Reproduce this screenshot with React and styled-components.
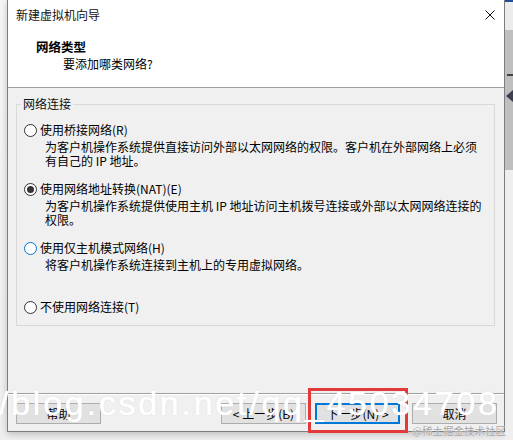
import React from 'react';
import styled, { createGlobalStyle } from 'styled-components';

const GlobalStyle = createGlobalStyle`
  html, body {
    margin: 0;
    padding: 0;
    background: #f4f4f4;
  }
  body {
    font-family: "Noto Sans CJK SC", "Noto Sans", sans-serif;
    font-size: 12px;
    color: #000;
  }
`;

const options = [
  {
    label: '使用桥接网络(R)',
    desc: ['为客户机操作系统提供直接访问外部以太网网络的权限。客户机在外部网络上必须', '有自己的 IP 地址。'],
  },
  {
    label: '使用网络地址转换(NAT)(E)',
    desc: ['为客户机操作系统提供使用主机 IP 地址访问主机拨号连接或外部以太网网络连接的', '权限。'],
    checked: true,
  },
  {
    label: '使用仅主机模式网络(H)',
    desc: ['将客户机操作系统连接到主机上的专用虚拟网络。'],
    focus: true,
  },
  {
    label: '不使用网络连接(T)',
  },
];

function App() {
  return (
    <Page>
      <GlobalStyle />
      <Dialog>
        <TitleBar>
          <Title>新建虚拟机向导</Title>
          <svg width='10' height='10' viewBox='0 0 10 10'>
            <path d='M0.5 0.5 L9.5 9.5 M9.5 0.5 L0.5 9.5' stroke='#111' strokeWidth='1' />
          </svg>
        </TitleBar>
        <Header>
          <Heading>网络类型</Heading>
          <SubHeading>要添加哪类网络?</SubHeading>
        </Header>
        <Body>
          <Group>
            <Legend>网络连接</Legend>
            {options.map((opt) => (
              <Option key={opt.label}>
                <RadioRow>
                  <Radio $checked={opt.checked} $focus={opt.focus} />
                  <span>{opt.label}</span>
                </RadioRow>
                {opt.desc && (
                  <Desc>
                    {opt.desc.map((line) => (
                      <DescLine key={line}>{line}</DescLine>
                    ))}
                  </Desc>
                )}
              </Option>
            ))}
          </Group>
        </Body>
        <Footer>
          <Button>帮助</Button>
          <Spacer />
          <Button>&lt; 上一步(B)</Button>
          <Button $primary $gap={9}>下一步(N) &gt;</Button>
          <Button $gap={12}>取消</Button>
        </Footer>
      </Dialog>
      <BackStrip>
        <StripTop />
        <StripMid>
          <Dash />
          <Arrow />
        </StripMid>
        <StripBottom />
      </BackStrip>

      <Highlight />
      <Watermark>/blog.csdn.net/qq_45034708</Watermark>
      <Credit>@稀土掘金技术社区</Credit>
    </Page>
  );
}

const Page = styled.div`
  position: relative;
  width: 513px;
  height: 440px;
  overflow: hidden;
  display: flex;
  align-items: flex-start;
  background: linear-gradient(#f6f6f6, #efefef);
`;

const Dialog = styled.div`
  box-sizing: border-box;
  width: 498px;
  height: 432px;
  margin-left: 7px;
  border: 1px solid #7d7d7d;
  border-top: none;
  background: #f0f0f0;
  display: flex;
  flex-direction: column;
  box-shadow: 0 2px 7px rgba(0, 0, 0, 0.22);
`;

const TitleBar = styled.div`
  height: 30px;
  background: #fff;
  display: flex;
  align-items: center;
  justify-content: space-between;
  padding: 0 9px 0 8px;
`;

const Title = styled.div`
  font-size: 12px;
  line-height: 16px;
  color: #111;
`;

const Header = styled.div`
  box-sizing: border-box;
  height: 58px;
  background: #fff;
  border-bottom: 1px solid #a0a0a0;
  padding: 9px 0 0 28px;
`;

const Heading = styled.div`
  font-weight: bold;
  font-size: 12.5px;
  line-height: 16px;
`;

const SubHeading = styled.div`
  margin-top: 1px;
  padding-left: 27px;
  line-height: 16px;
`;

const Body = styled.div`
  box-sizing: border-box;
  height: 305px;
  padding-top: 9px;
`;

const Group = styled.fieldset`
  margin: 0 9px 0 8px;
  padding: 11px 0 10px 7px;
  border: 1px solid #d9d9d9;
  display: flex;
  flex-direction: column;
  gap: 13px;
`;

const Legend = styled.legend`
  padding: 0 2px;
  margin-left: -3px;
  line-height: 14px;
  color: #111;
`;

const Option = styled.div`
  display: flex;
  flex-direction: column;
`;

const RadioRow = styled.div`
  display: flex;
  align-items: center;
  height: 16px;
  line-height: 16px;
  white-space: nowrap;
`;

const Radio = styled.span`
  box-sizing: border-box;
  width: 13px;
  height: 13px;
  margin-right: 3px;
  border-radius: 50%;
  border: 1px solid ${(p) => (p.$focus ? '#0078d7' : '#333')};
  background: #fff;
  display: flex;
  align-items: center;
  justify-content: center;
  &::after {
    content: '';
    width: 7px;
    height: 7px;
    border-radius: 50%;
    background: #333;
    display: ${(p) => (p.$checked ? 'block' : 'none')};
  }
`;

const Desc = styled.div`
  margin-top: 2px;
  padding-left: 21px;
  min-height: 28px;
`;

const DescLine = styled.div`
  line-height: 14px;
  white-space: nowrap;
`;

const Footer = styled.div`
  flex: 1;
  display: flex;
  align-items: flex-start;
  padding: 9px 7px 0 8px;
  border-top: 1px solid #a0a0a0;
  box-shadow: inset 0 1px 0 #fff;
`;

const Spacer = styled.div`
  flex: 1;
`;

const Button = styled.div`
  box-sizing: border-box;
  width: 85px;
  height: 21px;
  margin-left: ${(p) => p.$gap || 0}px;
  background: #e1e1e1;
  border: ${(p) => (p.$primary ? '2px solid #0078d7' : '1px solid #adadad')};
  display: flex;
  align-items: center;
  justify-content: center;
  font-size: 12px;
  white-space: nowrap;
`;

/* slice of the window that lies behind the dialog */
const BackStrip = styled.div`
  width: 8px;
  height: 440px;
  margin-left: auto;
  display: flex;
  flex-direction: column;
  overflow: hidden;
`;

const StripTop = styled.div`
  height: 30px;
  background: linear-gradient(#1f4e9a 0 2px, #ececec 2px);
`;

const StripMid = styled.div`
  height: 140px;
  background: #bfbfbf;
  display: flex;
  flex-direction: column;
  align-items: flex-start;
  padding-top: 44px;
  box-sizing: border-box;
`;

const Dash = styled.div`
  width: 6px;
  height: 2px;
  margin-left: 2px;
  background: #444;
`;

const Arrow = styled.div`
  margin-top: 14px;
  margin-left: 1px;
  width: 0;
  height: 0;
  border-top: 6px solid transparent;
  border-bottom: 6px solid transparent;
  border-right: 7px solid #3c4150;
`;

const StripBottom = styled.div`
  flex: 1;
  background: #efefef;
`;

const Highlight = styled.div`
  position: absolute;
  left: 308px;
  top: 388px;
  width: 100px;
  height: 45px;
  box-sizing: border-box;
  border: 3px solid #e23a3a;
`;

const Watermark = styled.div`
  position: absolute;
  left: -1px;
  top: 386px;
  font-family: "Liberation Sans", Arial, sans-serif;
  font-size: 34px;
  line-height: 34px;
  letter-spacing: 2.75px;
  color: #fff;
  text-shadow: 0 0 1px #fff, 0 0 2px rgba(0, 0, 0, 0.1);
  white-space: nowrap;
`;

const Credit = styled.div`
  position: absolute;
  left: 412px;
  top: 424px;
  font-size: 10.5px;
  line-height: 14px;
  color: #a3a3a3;
  text-shadow: 0 0 1px #fff;
  white-space: nowrap;
`;

export default App;
